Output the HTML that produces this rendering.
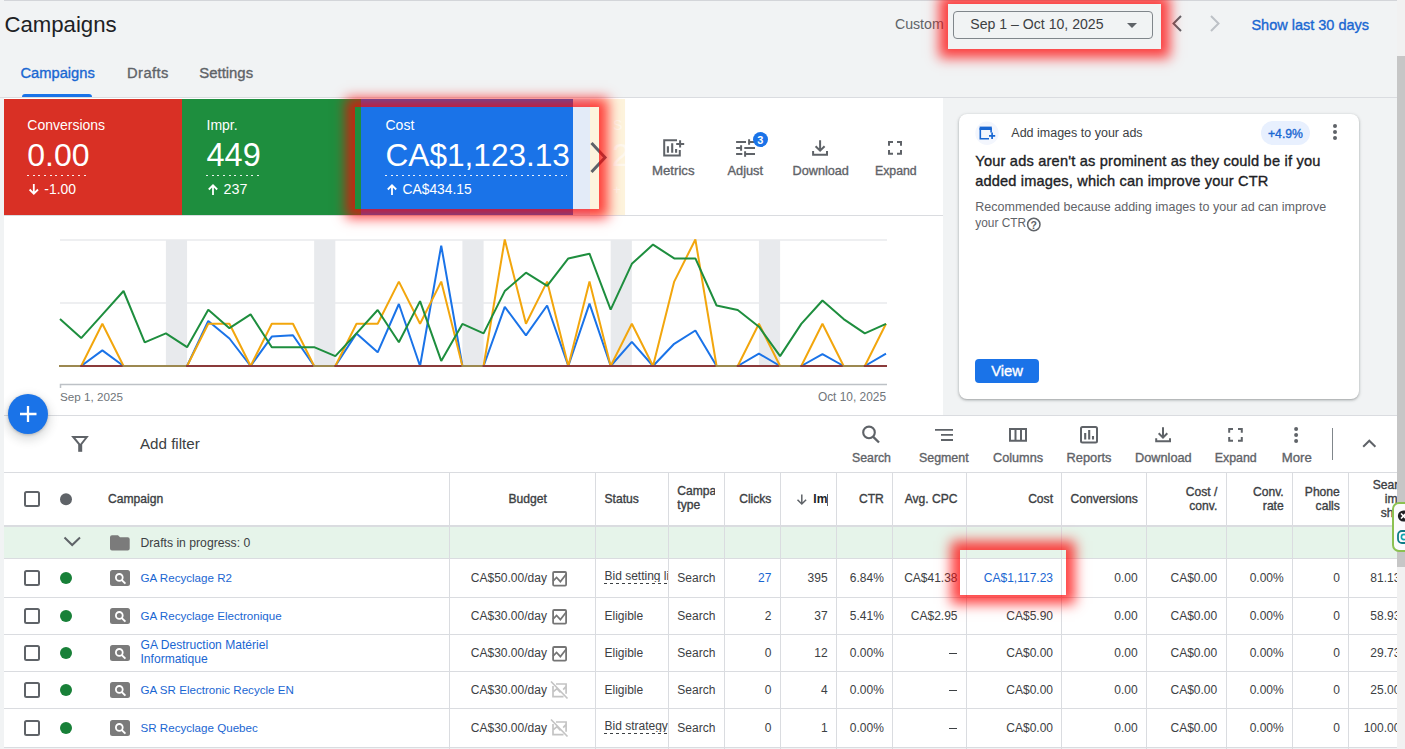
<!DOCTYPE html>
<html><head><meta charset="utf-8">
<style>
*{box-sizing:border-box;margin:0;padding:0}
html,body{width:1405px;height:749px;overflow:hidden;background:#f1f3f4;font-family:"Liberation Sans",sans-serif;color:#3c4043;position:relative}
.r{position:absolute}
.t{position:absolute;white-space:nowrap;line-height:1}
svg{overflow:visible}
</style></head><body>
<div class="r" style="left:4px;top:0px;width:1393px;height:1px;background:#d3d5d9;"></div>
<div class="r" style="left:953px;top:11px;width:200px;height:28px;background:transparent;border:1px solid #80868b;border-radius:4px;"></div>
<div class="r" style="left:22px;top:94px;width:70px;height:3px;background:#1a73e8;border-radius:3px 3px 0 0;"></div>
<div class="r" style="left:0px;top:97px;width:1397px;height:1px;background:#dadce0;"></div>
<div class="r" style="left:4px;top:98px;width:939px;height:317px;background:#ffffff;"></div>
<div class="r" style="left:4px;top:99px;width:178px;height:116px;background:#d93025;"></div>
<div class="r" style="left:182px;top:99px;width:179px;height:116px;background:#1e8e3e;"></div>
<div class="r" style="left:361px;top:99px;width:212px;height:116px;background:#1a73e8;"></div>
<div class="r" style="left:573px;top:99px;width:17px;height:116px;background:#e3ebf8;"></div>
<div class="r" style="left:590px;top:99px;width:35px;height:116px;background:#fdf4dd;"></div>
<div class="r" style="left:27px;top:175px;width:62px;height:1px;background:repeating-linear-gradient(to right,rgba(255,255,255,.9) 0 2px,transparent 2px 5.67px);left:26.8px;"></div>
<div class="r" style="left:27px;top:175px;width:54px;height:1px;background:repeating-linear-gradient(to right,rgba(255,255,255,.9) 0 2px,transparent 2px 5.67px);left:206.0px;"></div>
<div class="r" style="left:27px;top:175px;width:182px;height:1px;background:repeating-linear-gradient(to right,rgba(255,255,255,.9) 0 2px,transparent 2px 5.67px);left:385.0px;"></div>
<div class="r" style="left:4px;top:215px;width:939px;height:1px;background:#dadce0;"></div>
<div class="r" style="left:959px;top:114px;width:400px;height:285px;background:#ffffff;border-radius:8px;box-shadow:0 1px 2px rgba(60,64,67,.3),0 1px 3px 1px rgba(60,64,67,.15);"></div>
<div class="r" style="left:1261px;top:121px;width:49px;height:24px;background:#e8f0fe;border-radius:12px;"></div>
<div class="r" style="left:975px;top:359px;width:64px;height:24px;background:#1a73e8;border-radius:4px;"></div>
<div class="r" style="left:4px;top:415px;width:1393px;height:1px;background:#dadce0;"></div>
<div class="r" style="left:4px;top:416px;width:1393px;height:56px;background:#ffffff;"></div>
<div class="r" style="left:1332px;top:428px;width:1px;height:32px;background:#80868b;"></div>
<div class="r" style="left:4px;top:472px;width:1393px;height:1px;background:#dadce0;"></div>
<div class="r" style="left:4px;top:473px;width:1393px;height:52px;background:#ffffff;"></div>
<div class="r" style="left:4px;top:525px;width:1393px;height:2px;background:#dadce0;"></div>
<div class="r" style="left:4px;top:527px;width:1393px;height:31px;background:#e6f4ea;"></div>
<div class="r" style="left:4px;top:558px;width:1393px;height:1px;background:#dadce0;"></div>
<div class="r" style="left:4px;top:559px;width:1393px;height:38px;background:#ffffff;"></div>
<div class="r" style="left:4px;top:597px;width:1393px;height:1px;background:#dadce0;"></div>
<div class="r" style="left:4px;top:598px;width:1393px;height:36px;background:#ffffff;"></div>
<div class="r" style="left:4px;top:634px;width:1393px;height:1px;background:#dadce0;"></div>
<div class="r" style="left:4px;top:635px;width:1393px;height:36px;background:#ffffff;"></div>
<div class="r" style="left:4px;top:671px;width:1393px;height:1px;background:#dadce0;"></div>
<div class="r" style="left:4px;top:672px;width:1393px;height:36px;background:#ffffff;"></div>
<div class="r" style="left:4px;top:708px;width:1393px;height:1px;background:#dadce0;"></div>
<div class="r" style="left:4px;top:709px;width:1393px;height:38px;background:#ffffff;"></div>
<div class="r" style="left:4px;top:747px;width:1393px;height:1px;background:#dadce0;"></div>
<div class="r" style="left:449px;top:473px;width:1px;height:276px;background:#dadce0;"></div>
<div class="r" style="left:595px;top:473px;width:1px;height:276px;background:#dadce0;"></div>
<div class="r" style="left:668px;top:473px;width:1px;height:276px;background:#dadce0;"></div>
<div class="r" style="left:724px;top:473px;width:1px;height:276px;background:#dadce0;"></div>
<div class="r" style="left:780px;top:473px;width:1px;height:276px;background:#dadce0;"></div>
<div class="r" style="left:836px;top:473px;width:1px;height:276px;background:#dadce0;"></div>
<div class="r" style="left:892px;top:473px;width:1px;height:276px;background:#dadce0;"></div>
<div class="r" style="left:966px;top:473px;width:1px;height:276px;background:#dadce0;"></div>
<div class="r" style="left:1061px;top:473px;width:1px;height:276px;background:#dadce0;"></div>
<div class="r" style="left:1146px;top:473px;width:1px;height:276px;background:#dadce0;"></div>
<div class="r" style="left:1226px;top:473px;width:1px;height:276px;background:#dadce0;"></div>
<div class="r" style="left:1292px;top:473px;width:1px;height:276px;background:#dadce0;"></div>
<div class="r" style="left:1348px;top:473px;width:1px;height:276px;background:#dadce0;"></div>
<div class="r" style="left:826.8px;top:494px;width:0.8px;height:12px;background:#5f6368;"></div>
<div class="r" style="left:604px;top:583px;width:63.5px;height:1.2px;background:repeating-linear-gradient(to right,#3c4043 0 3px,transparent 3px 6px);"></div>
<div class="r" style="left:948.8px;top:653px;width:8.5px;height:1.2px;background:#3c4043;"></div>
<div class="r" style="left:948.8px;top:690px;width:8.5px;height:1.2px;background:#3c4043;"></div>
<div class="r" style="left:604px;top:733px;width:63.5px;height:1.2px;background:repeating-linear-gradient(to right,#3c4043 0 3px,transparent 3px 6px);"></div>
<div class="r" style="left:948.8px;top:728px;width:8.5px;height:1.2px;background:#3c4043;"></div>
<svg class="r" style="left:0;top:0" width="1405" height="749" viewBox="0 0 1405 749"><path d="M1127 23h10l-5 5z" fill="#5f6368"/><path d="M1181 16l-7.5 7.5 7.5 7.5" fill="none" stroke="#5f6368" stroke-width="2"/><path d="M1211 16l7.5 7.5-7.5 7.5" fill="none" stroke="#bdc1c6" stroke-width="2"/><path d="M33.8 184V193.5M29.599999999999998 189.5l4.2 4.2 4.2-4.2" fill="none" stroke="#fff" stroke-width="1.8"/><path d="M213.0 195V185.5M208.8 189.5l4.2-4.2 4.2 4.2" fill="none" stroke="#fff" stroke-width="1.8"/><path d="M392.0 195V185.5M387.8 189.5l4.2-4.2 4.2 4.2" fill="none" stroke="#fff" stroke-width="1.8"/><path d="M591.5 143l13.5 14.5-13.5 14.5" fill="none" stroke="#5f6368" stroke-width="3"/><path d="M677 140.2H664.2V155.4H679.8V150" fill="none" stroke="#5f6368" stroke-width="2"/><path d="M676.2 143.9H684.2M680.1 140.2V147.6" fill="none" stroke="#5f6368" stroke-width="2"/><path d="M667.9 146.3V152.7M672.2 143.2V152.7M676.1 149.1V152.7" fill="none" stroke="#5f6368" stroke-width="2.1"/><path d="M736.1 141.9H746M749.1 139.2V144.7M750 141.9H756M736.1 148H741M741.1 145.2V150.7M744.3 148H755M736.1 153.9H742.3M745.1 151.2V156.7M746 153.9H755" fill="none" stroke="#5f6368" stroke-width="2"/><path d="M820.1 140.2V150.5M815.6 146.2l4.5 4.5 4.5-4.5M813.1 151V154.7H827V151" fill="none" stroke="#5f6368" stroke-width="2"/><path d="M889 145.8V141.9H893M897 141.9H901V145.8M901 149.9V153.8H897M893 153.8H889V149.9" fill="none" stroke="#5f6368" stroke-width="2"/><rect x="165.90" y="240" width="21.18" height="126" fill="#e8eaed"/><rect x="314.15" y="240" width="21.18" height="126" fill="#e8eaed"/><rect x="462.41" y="240" width="21.18" height="126" fill="#e8eaed"/><rect x="610.67" y="240" width="21.18" height="126" fill="#e8eaed"/><rect x="758.92" y="240" width="21.18" height="126" fill="#e8eaed"/><line x1="60" y1="240" x2="887" y2="240" stroke="#e8eaed" stroke-width="1.5"/><line x1="60" y1="303" x2="887" y2="303" stroke="#e8eaed" stroke-width="1.5"/><polyline points="60.00,366.0 81.18,366.0 102.36,350.4 123.54,366.0 144.72,366.0 165.90,366.0 187.08,366.0 208.26,321.0 229.44,338.5 250.62,366.0 271.79,336.6 292.97,335.3 314.15,366.0 335.33,366.0 356.51,333.4 377.69,352.3 398.87,304.0 420.05,366.0 441.23,245.6 462.41,366.0 483.59,366.0 504.77,306.8 525.95,335.3 547.13,305.5 568.31,366.0 589.49,303.6 610.67,366.0 631.85,341.9 653.03,366.0 674.21,343.8 695.38,330.5 716.56,366.0 737.74,366.0 758.92,353.6 780.10,366.0 801.28,366.0 822.46,354.2 843.64,366.0 864.82,366.0 886.00,353.6" fill="none" stroke="#1a73e8" stroke-width="2" stroke-linejoin="bevel"/><polyline points="60.00,366.0 81.18,366.0 102.36,323.8 123.54,366.0 144.72,366.0 165.90,366.0 187.08,366.0 208.26,323.8 229.44,323.8 250.62,366.0 271.79,323.8 292.97,323.8 314.15,366.0 335.33,366.0 356.51,323.8 377.69,323.8 398.87,281.6 420.05,323.8 441.23,281.6 462.41,366.0 483.59,366.0 504.77,239.5 525.95,323.8 547.13,281.6 568.31,366.0 589.49,281.6 610.67,366.0 631.85,323.8 653.03,366.0 674.21,281.6 695.38,239.5 716.56,366.0 737.74,366.0 758.92,323.8 780.10,366.0 801.28,366.0 822.46,323.8 843.64,366.0 864.82,366.0 886.00,323.8" fill="none" stroke="#f2a60d" stroke-width="2" stroke-linejoin="bevel"/><polyline points="60.00,319.1 81.18,338.1 102.36,314.6 123.54,291.0 144.72,342.3 165.90,333.4 187.08,347.2 208.26,309.7 229.44,328.2 250.62,314.4 271.79,347.2 292.97,347.2 314.15,347.2 335.33,356.1 356.51,333.4 377.69,310.0 398.87,342.3 420.05,301.1 441.23,360.9 462.41,323.9 483.59,333.4 504.77,291.1 525.95,272.7 547.13,285.9 568.31,258.4 589.49,253.7 610.67,309.7 631.85,263.8 653.03,244.6 674.21,258.4 695.38,258.4 716.56,305.5 737.74,310.0 758.92,326.7 780.10,356.1 801.28,323.9 822.46,300.5 843.64,319.1 864.82,333.4 886.00,323.9" fill="none" stroke="#1e8e3e" stroke-width="2" stroke-linejoin="bevel"/><line x1="60.00" y1="366" x2="81.18" y2="366" stroke="#9c8850" stroke-width="2" stroke-linecap="square"/><line x1="81.18" y1="366" x2="102.36" y2="366" stroke="#8a3a3a" stroke-width="2" stroke-linecap="square"/><line x1="102.36" y1="366" x2="123.54" y2="366" stroke="#8a3a3a" stroke-width="2" stroke-linecap="square"/><line x1="123.54" y1="366" x2="144.72" y2="366" stroke="#9c8850" stroke-width="2" stroke-linecap="square"/><line x1="144.72" y1="366" x2="165.90" y2="366" stroke="#9c8850" stroke-width="2" stroke-linecap="square"/><line x1="165.90" y1="366" x2="187.08" y2="366" stroke="#9c8850" stroke-width="2" stroke-linecap="square"/><line x1="187.08" y1="366" x2="208.26" y2="366" stroke="#8a3a3a" stroke-width="2" stroke-linecap="square"/><line x1="208.26" y1="366" x2="229.44" y2="366" stroke="#8a3a3a" stroke-width="2" stroke-linecap="square"/><line x1="229.44" y1="366" x2="250.62" y2="366" stroke="#8a3a3a" stroke-width="2" stroke-linecap="square"/><line x1="250.62" y1="366" x2="271.79" y2="366" stroke="#8a3a3a" stroke-width="2" stroke-linecap="square"/><line x1="271.79" y1="366" x2="292.97" y2="366" stroke="#8a3a3a" stroke-width="2" stroke-linecap="square"/><line x1="292.97" y1="366" x2="314.15" y2="366" stroke="#8a3a3a" stroke-width="2" stroke-linecap="square"/><line x1="314.15" y1="366" x2="335.33" y2="366" stroke="#9c8850" stroke-width="2" stroke-linecap="square"/><line x1="335.33" y1="366" x2="356.51" y2="366" stroke="#8a3a3a" stroke-width="2" stroke-linecap="square"/><line x1="356.51" y1="366" x2="377.69" y2="366" stroke="#8a3a3a" stroke-width="2" stroke-linecap="square"/><line x1="377.69" y1="366" x2="398.87" y2="366" stroke="#8a3a3a" stroke-width="2" stroke-linecap="square"/><line x1="398.87" y1="366" x2="420.05" y2="366" stroke="#8a3a3a" stroke-width="2" stroke-linecap="square"/><line x1="420.05" y1="366" x2="441.23" y2="366" stroke="#8a3a3a" stroke-width="2" stroke-linecap="square"/><line x1="441.23" y1="366" x2="462.41" y2="366" stroke="#8a3a3a" stroke-width="2" stroke-linecap="square"/><line x1="462.41" y1="366" x2="483.59" y2="366" stroke="#9c8850" stroke-width="2" stroke-linecap="square"/><line x1="483.59" y1="366" x2="504.77" y2="366" stroke="#8a3a3a" stroke-width="2" stroke-linecap="square"/><line x1="504.77" y1="366" x2="525.95" y2="366" stroke="#8a3a3a" stroke-width="2" stroke-linecap="square"/><line x1="525.95" y1="366" x2="547.13" y2="366" stroke="#8a3a3a" stroke-width="2" stroke-linecap="square"/><line x1="547.13" y1="366" x2="568.31" y2="366" stroke="#8a3a3a" stroke-width="2" stroke-linecap="square"/><line x1="568.31" y1="366" x2="589.49" y2="366" stroke="#8a3a3a" stroke-width="2" stroke-linecap="square"/><line x1="589.49" y1="366" x2="610.67" y2="366" stroke="#8a3a3a" stroke-width="2" stroke-linecap="square"/><line x1="610.67" y1="366" x2="631.85" y2="366" stroke="#8a3a3a" stroke-width="2" stroke-linecap="square"/><line x1="631.85" y1="366" x2="653.03" y2="366" stroke="#8a3a3a" stroke-width="2" stroke-linecap="square"/><line x1="653.03" y1="366" x2="674.21" y2="366" stroke="#8a3a3a" stroke-width="2" stroke-linecap="square"/><line x1="674.21" y1="366" x2="695.38" y2="366" stroke="#8a3a3a" stroke-width="2" stroke-linecap="square"/><line x1="695.38" y1="366" x2="716.56" y2="366" stroke="#8a3a3a" stroke-width="2" stroke-linecap="square"/><line x1="716.56" y1="366" x2="737.74" y2="366" stroke="#9c8850" stroke-width="2" stroke-linecap="square"/><line x1="737.74" y1="366" x2="758.92" y2="366" stroke="#8a3a3a" stroke-width="2" stroke-linecap="square"/><line x1="758.92" y1="366" x2="780.10" y2="366" stroke="#8a3a3a" stroke-width="2" stroke-linecap="square"/><line x1="780.10" y1="366" x2="801.28" y2="366" stroke="#9c8850" stroke-width="2" stroke-linecap="square"/><line x1="801.28" y1="366" x2="822.46" y2="366" stroke="#8a3a3a" stroke-width="2" stroke-linecap="square"/><line x1="822.46" y1="366" x2="843.64" y2="366" stroke="#8a3a3a" stroke-width="2" stroke-linecap="square"/><line x1="843.64" y1="366" x2="864.82" y2="366" stroke="#9c8850" stroke-width="2" stroke-linecap="square"/><line x1="864.82" y1="366" x2="886.00" y2="366" stroke="#8a3a3a" stroke-width="2" stroke-linecap="square"/><path d="M60.5 388V384.5H887" fill="none" stroke="#bdc1c6" stroke-width="1.5"/><circle cx="987" cy="133.2" r="11.7" fill="#f3f6fd"/><path d="M979.6 126.6H991.8V130H979.6z" fill="#1967d2"/><path d="M980.3 128V138.8H989M991.1 128V132.5" fill="none" stroke="#1967d2" stroke-width="1.6"/><path d="M989 135.8H995.2M992.1 132.6V139" fill="none" stroke="#1967d2" stroke-width="1.7"/><circle cx="1335" cy="126" r="2" fill="#5f6368"/><circle cx="1335" cy="132" r="2" fill="#5f6368"/><circle cx="1335" cy="138" r="2" fill="#5f6368"/><circle cx="1033.8" cy="224.5" r="6.2" fill="none" stroke="#5f6368" stroke-width="1.5"/><path d="M73.2 437H86.8L80.2 445.5z" fill="none" stroke="#5f6368" stroke-width="2" stroke-linejoin="miter"/><rect x="78.2" y="444.5" width="4" height="7.3" fill="#5f6368"/><circle cx="869" cy="432.4" r="5.8" fill="none" stroke="#5f6368" stroke-width="2.1"/><path d="M873 436.6L879 442.5" stroke="#5f6368" stroke-width="2.3"/><path d="M935 429.9H953M941 434.9H953M941 440H953" stroke="#5f6368" stroke-width="1.8"/><path d="M1010 429.1H1026V440.8H1010z M1015.5 429V441 M1021 429V441" fill="none" stroke="#5f6368" stroke-width="2"/><rect x="1081" y="427" width="16" height="15.6" rx="1.5" fill="none" stroke="#5f6368" stroke-width="2"/><path d="M1085.2 433V439.6M1089.2 430V439.6M1093 436V439.6" stroke="#5f6368" stroke-width="2.1"/><path d="M1163 427.3V437.5M1158.7 433.3l4.3 4.3 4.3-4.3M1156.2 438.2V441.2H1170V438.2" fill="none" stroke="#5f6368" stroke-width="2"/><path d="M1229.2 432.8V429.1H1233M1238 429.1H1241.8V432.8M1241.8 437V440.8H1238M1233 440.8H1229.2V437" fill="none" stroke="#5f6368" stroke-width="2"/><circle cx="1296.1" cy="428.9" r="2" fill="#5f6368"/><circle cx="1296.1" cy="434.9" r="2" fill="#5f6368"/><circle cx="1296.1" cy="440.9" r="2" fill="#5f6368"/><path d="M1363.2 446.8L1369.3 440.7 1375.4 446.8" fill="none" stroke="#5f6368" stroke-width="2"/><rect x="25" y="492" width="14" height="14" rx="1.5" fill="none" stroke="#5f6368" stroke-width="2"/><circle cx="66" cy="499.2" r="6" fill="#5f6368"/><path d="M801.8 494.5V504M797.5 499.7l4.3 4.3 4.3-4.3" fill="none" stroke="#5f6368" stroke-width="1.5"/><path d="M64.5 537.5L72.2 545 80 537.5" fill="none" stroke="#5f6368" stroke-width="2"/><path d="M110 537.3a2 2 0 0 1 2-2h6l2 2h7.7a2 2 0 0 1 2 2v9.3a2 2 0 0 1-2 2H112a2 2 0 0 1-2-2z" fill="#7b7b7b"/><rect x="25" y="571" width="14" height="14" rx="1.5" fill="none" stroke="#5f6368" stroke-width="2"/><circle cx="66" cy="578" r="6" fill="#188038"/><rect x="110" y="570" width="20" height="16" rx="2.5" fill="#7b7b7b"/><circle cx="119.3" cy="577.4" r="3.4" fill="none" stroke="#fff" stroke-width="1.8"/><path d="M121.6 579.8l3.8 3.8" stroke="#fff" stroke-width="1.9"/><rect x="553.1" y="572" width="13" height="13.6" rx="1" fill="none" stroke="#757575" stroke-width="1.8"/><path d="M553 581.2L556.6 577.4L560.4 581.6L566.5 573.8" fill="none" stroke="#757575" stroke-width="1.7"/><rect x="25" y="609" width="14" height="14" rx="1.5" fill="none" stroke="#5f6368" stroke-width="2"/><circle cx="66" cy="616" r="6" fill="#188038"/><rect x="110" y="608" width="20" height="16" rx="2.5" fill="#7b7b7b"/><circle cx="119.3" cy="615.4" r="3.4" fill="none" stroke="#fff" stroke-width="1.8"/><path d="M121.6 617.8l3.8 3.8" stroke="#fff" stroke-width="1.9"/><rect x="553.1" y="610" width="13" height="13.6" rx="1" fill="none" stroke="#757575" stroke-width="1.8"/><path d="M553 619.2L556.6 615.4L560.4 619.6L566.5 611.8" fill="none" stroke="#757575" stroke-width="1.7"/><rect x="25" y="646" width="14" height="14" rx="1.5" fill="none" stroke="#5f6368" stroke-width="2"/><circle cx="66" cy="653" r="6" fill="#188038"/><rect x="110" y="645" width="20" height="16" rx="2.5" fill="#7b7b7b"/><circle cx="119.3" cy="652.4" r="3.4" fill="none" stroke="#fff" stroke-width="1.8"/><path d="M121.6 654.8l3.8 3.8" stroke="#fff" stroke-width="1.9"/><rect x="553.1" y="647" width="13" height="13.6" rx="1" fill="none" stroke="#757575" stroke-width="1.8"/><path d="M553 656.2L556.6 652.4L560.4 656.6L566.5 648.8" fill="none" stroke="#757575" stroke-width="1.7"/><rect x="25" y="683" width="14" height="14" rx="1.5" fill="none" stroke="#5f6368" stroke-width="2"/><circle cx="66" cy="690" r="6" fill="#188038"/><rect x="110" y="682" width="20" height="16" rx="2.5" fill="#7b7b7b"/><circle cx="119.3" cy="689.4" r="3.4" fill="none" stroke="#fff" stroke-width="1.8"/><path d="M121.6 691.8l3.8 3.8" stroke="#fff" stroke-width="1.9"/><path d="M556 684H566.1V693.8M553 686V696.7H563.5M552.8 692.1L557 688.6L560.5 692.5M563.2 689.6L566.4 686.2M551 681.5L567.5 698.5" fill="none" stroke="#c4c4c4" stroke-width="1.7"/><rect x="25" y="721" width="14" height="14" rx="1.5" fill="none" stroke="#5f6368" stroke-width="2"/><circle cx="66" cy="728" r="6" fill="#188038"/><rect x="110" y="720" width="20" height="16" rx="2.5" fill="#7b7b7b"/><circle cx="119.3" cy="727.4" r="3.4" fill="none" stroke="#fff" stroke-width="1.8"/><path d="M121.6 729.8l3.8 3.8" stroke="#fff" stroke-width="1.9"/><path d="M556 722H566.1V731.8M553 724V734.7H563.5M552.8 730.1L557 726.6L560.5 730.5M563.2 727.6L566.4 724.2M551 719.5L567.5 736.5" fill="none" stroke="#c4c4c4" stroke-width="1.7"/></svg>
<div class="t" style="left:4.40px;top:14.00px;font-size:22.2px;color:#202124;">Campaigns</div>
<div class="t" style="left:894.90px;top:17.00px;font-size:14.2px;color:#5f6368;">Custom</div>
<div class="t" style="left:970.30px;top:17.00px;font-size:14.1px;color:#3c4043;">Sep 1 – Oct 10, 2025</div>
<div class="t" style="left:1251.40px;top:18.00px;font-size:14.5px;color:#1967d2;-webkit-text-stroke:0.35px #1967d2;">Show last 30 days</div>
<div class="t" style="left:20.50px;top:66.00px;font-size:14.7px;color:#1967d2;-webkit-text-stroke:0.35px #1967d2;">Campaigns</div>
<div class="t" style="left:127.00px;top:66.00px;font-size:14.7px;color:#5f6368;-webkit-text-stroke:0.35px #5f6368;letter-spacing:0.45px;">Drafts</div>
<div class="t" style="left:199.30px;top:66.00px;font-size:14.9px;color:#5f6368;-webkit-text-stroke:0.35px #5f6368;">Settings</div>
<div class="t" style="left:27.30px;top:118.00px;font-size:14px;color:#ffffff;">Conversions</div>
<div class="t" style="left:27.30px;top:139.00px;font-size:32px;color:#ffffff;">0.00</div>
<div class="t" style="left:44.30px;top:183.00px;font-size:13.9px;color:#ffffff;">-1.00</div>
<div class="t" style="left:206.50px;top:118.00px;font-size:14px;color:#ffffff;">Impr.</div>
<div class="t" style="left:206.50px;top:139.00px;font-size:32.5px;color:#ffffff;">449</div>
<div class="t" style="left:223.50px;top:182.00px;font-size:14.3px;color:#ffffff;">237</div>
<div class="t" style="left:385.50px;top:118.00px;font-size:14px;color:#ffffff;">Cost</div>
<div class="t" style="left:385.50px;top:140.00px;font-size:31.6px;color:#ffffff;">CA$1,123.13</div>
<div class="t" style="left:402.60px;top:183.00px;font-size:13.8px;color:#ffffff;">CA$434.15</div>
<div class="t" style="left:613.00px;top:118.00px;font-size:14px;color:rgba(255,255,255,.55);">S</div>
<div class="t" style="left:612.00px;top:139.00px;font-size:32px;color:rgba(255,255,255,.55);">2</div>
<div class="t" style="left:613.00px;top:183.00px;font-size:13px;color:rgba(255,255,255,.55);">+</div>
<div class="t" style="left:652.00px;top:164.00px;font-size:13.2px;color:#5f6368;-webkit-text-stroke:0.35px #5f6368;">Metrics</div>
<div class="r" style="left:753.1px;top:132.1px;width:15.4px;height:15.4px;background:#1a73e8;border-radius:50%;"></div>
<div class="t" style="left:757.30px;top:135.00px;font-size:11px;color:#ffffff;font-weight:bold;">3</div>
<div class="t" style="left:727.50px;top:165.00px;font-size:12.8px;color:#5f6368;-webkit-text-stroke:0.35px #5f6368;">Adjust</div>
<div class="t" style="left:792.50px;top:165.00px;font-size:12.7px;color:#5f6368;-webkit-text-stroke:0.35px #5f6368;">Download</div>
<div class="t" style="left:875.00px;top:165.00px;font-size:12.3px;color:#5f6368;-webkit-text-stroke:0.35px #5f6368;">Expand</div>
<div class="t" style="left:60.00px;top:391.00px;font-size:11.7px;color:#70757a;">Sep 1, 2025</div>
<div class="t" style="right:519.00px;top:392.00px;font-size:11.9px;color:#70757a;">Oct 10, 2025</div>
<div class="t" style="left:1011.30px;top:127.00px;font-size:12.5px;color:#3c4043;">Add images to your ads</div>
<div class="t" style="left:1268.00px;top:128.00px;font-size:12.2px;color:#1967d2;-webkit-text-stroke:0.35px #1967d2;">+4.9%</div>
<div class="t" style="left:975.30px;top:154.00px;font-size:14.6px;color:#202124;-webkit-text-stroke:0.35px #202124;letter-spacing:0.2px;">Your ads aren&#x27;t as prominent as they could be if you</div>
<div class="t" style="left:975.30px;top:174.00px;font-size:14.6px;color:#202124;-webkit-text-stroke:0.35px #202124;letter-spacing:0.15px;">added images, which can improve your CTR</div>
<div class="t" style="left:975.30px;top:201.00px;font-size:12.5px;color:#5f6368;">Recommended because adding images to your ad can improve</div>
<div class="t" style="left:975.30px;top:218.00px;font-size:11.9px;color:#5f6368;">your CTR</div>
<div class="t" style="left:1030.50px;top:220.00px;font-size:10.5px;color:#5f6368;font-weight:bold;">?</div>
<div class="t" style="left:991.20px;top:364.00px;font-size:14.8px;color:#ffffff;-webkit-text-stroke:0.35px #ffffff;">View</div>
<div class="t" style="left:139.90px;top:436.00px;font-size:15.2px;color:#3c4043;">Add filter</div>
<div class="t" style="left:852.00px;top:452.00px;font-size:12.3px;color:#5f6368;-webkit-text-stroke:0.35px #5f6368;">Search</div>
<div class="t" style="left:919.00px;top:452.00px;font-size:12.4px;color:#5f6368;-webkit-text-stroke:0.35px #5f6368;">Segment</div>
<div class="t" style="left:993.00px;top:452.00px;font-size:12.7px;color:#5f6368;-webkit-text-stroke:0.35px #5f6368;">Columns</div>
<div class="t" style="left:1066.60px;top:452.00px;font-size:12.8px;color:#5f6368;-webkit-text-stroke:0.35px #5f6368;">Reports</div>
<div class="t" style="left:1135.00px;top:452.00px;font-size:12.75px;color:#5f6368;-webkit-text-stroke:0.35px #5f6368;">Download</div>
<div class="t" style="left:1214.70px;top:452.00px;font-size:12.4px;color:#5f6368;-webkit-text-stroke:0.35px #5f6368;">Expand</div>
<div class="t" style="left:1281.70px;top:451.00px;font-size:13.2px;color:#5f6368;-webkit-text-stroke:0.35px #5f6368;">More</div>
<div class="t" style="left:108.00px;top:493.00px;font-size:12.1px;color:#3c4043;-webkit-text-stroke:0.35px #3c4043;">Campaign</div>
<div class="t" style="right:858.20px;top:493.00px;font-size:12.1px;color:#3c4043;-webkit-text-stroke:0.35px #3c4043;">Budget</div>
<div class="t" style="left:604.50px;top:493.00px;font-size:12.1px;color:#3c4043;-webkit-text-stroke:0.35px #3c4043;">Status</div>
<div class="t" style="left:677.3px;top:485px;width:38px;overflow:hidden;font-size:12.1px;line-height:13.5px;-webkit-text-stroke:0.35px #3c4043;color:#3c4043;white-space:normal">Campaign<br>type</div>
<div class="t" style="right:633.60px;top:493.00px;font-size:12.1px;color:#3c4043;-webkit-text-stroke:0.35px #3c4043;">Clicks</div>
<div class="t" style="left:813.3px;top:493px;width:14px;overflow:hidden;font-size:12.1px;font-weight:bold;color:#202124">Impr.</div>
<div class="t" style="right:521.20px;top:493.00px;font-size:12.1px;color:#3c4043;-webkit-text-stroke:0.35px #3c4043;">CTR</div>
<div class="t" style="right:447.50px;top:493.00px;font-size:12.1px;color:#3c4043;-webkit-text-stroke:0.35px #3c4043;">Avg. CPC</div>
<div class="t" style="right:352.00px;top:493.00px;font-size:12.1px;color:#3c4043;-webkit-text-stroke:0.35px #3c4043;">Cost</div>
<div class="t" style="right:267.30px;top:493.00px;font-size:12.1px;color:#3c4043;-webkit-text-stroke:0.35px #3c4043;">Conversions</div>
<div class="t" style="right:187.70px;top:486.00px;font-size:12.1px;color:#3c4043;-webkit-text-stroke:0.35px #3c4043;">Cost /</div>
<div class="t" style="right:187.70px;top:500.00px;font-size:12.1px;color:#3c4043;-webkit-text-stroke:0.35px #3c4043;">conv.</div>
<div class="t" style="right:121.30px;top:486.00px;font-size:12.1px;color:#3c4043;-webkit-text-stroke:0.35px #3c4043;">Conv.</div>
<div class="t" style="right:121.30px;top:500.00px;font-size:12.1px;color:#3c4043;-webkit-text-stroke:0.35px #3c4043;">rate</div>
<div class="t" style="right:65.20px;top:486.00px;font-size:12.1px;color:#3c4043;-webkit-text-stroke:0.35px #3c4043;">Phone</div>
<div class="t" style="right:65.20px;top:500.00px;font-size:12.1px;color:#3c4043;-webkit-text-stroke:0.35px #3c4043;">calls</div>
<div class="t" style="right:-6.00px;top:479.00px;font-size:12.1px;color:#3c4043;-webkit-text-stroke:0.35px #3c4043;">Search</div>
<div class="t" style="right:-6.00px;top:493.00px;font-size:12.1px;color:#3c4043;-webkit-text-stroke:0.35px #3c4043;">impr.</div>
<div class="t" style="right:-6.00px;top:507.00px;font-size:12.1px;color:#3c4043;-webkit-text-stroke:0.35px #3c4043;">share</div>
<div class="t" style="left:140.50px;top:537.00px;font-size:12.2px;color:#3c4043;">Drafts in progress: 0</div>
<div class="t" style="left:140.50px;top:572.00px;font-size:11.6px;color:#1a66d2;">GA Recyclage R2</div>
<div class="t" style="right:858.10px;top:572.00px;font-size:12.0px;color:#3c4043;">CA$50.00/day</div>
<div class="t" style="left:604.5px;top:570px;width:63px;overflow:hidden;font-size:12.0px;color:#3c4043">Bid setting limited</div>
<div class="t" style="left:677.30px;top:572.00px;font-size:12.0px;color:#3c4043;">Search</div>
<div class="t" style="right:633.60px;top:572.00px;font-size:12.0px;color:#1a66d2;">27</div>
<div class="t" style="right:577.40px;top:572.00px;font-size:12.0px;color:#3c4043;">395</div>
<div class="t" style="right:521.20px;top:572.00px;font-size:12.0px;color:#3c4043;">6.84%</div>
<div class="t" style="right:447.50px;top:572.00px;font-size:12.0px;color:#3c4043;">CA$41.38</div>
<div class="t" style="right:352.00px;top:572.00px;font-size:12.0px;color:#1a66d2;">CA$1,117.23</div>
<div class="t" style="right:267.30px;top:572.00px;font-size:12.0px;color:#3c4043;">0.00</div>
<div class="t" style="right:187.80px;top:572.00px;font-size:12.0px;color:#3c4043;">CA$0.00</div>
<div class="t" style="right:121.30px;top:572.00px;font-size:12.0px;color:#3c4043;">0.00%</div>
<div class="t" style="right:65.20px;top:572.00px;font-size:12.0px;color:#3c4043;">0</div>
<div class="t" style="right:-6.00px;top:572.00px;font-size:12.0px;color:#3c4043;">81.13%</div>
<div class="t" style="left:140.50px;top:610.00px;font-size:11.6px;color:#1a66d2;">GA Recyclage Electronique</div>
<div class="t" style="right:858.10px;top:610.00px;font-size:12.0px;color:#3c4043;">CA$30.00/day</div>
<div class="t" style="left:604.50px;top:610.00px;font-size:12.0px;color:#3c4043;">Eligible</div>
<div class="t" style="left:677.30px;top:610.00px;font-size:12.0px;color:#3c4043;">Search</div>
<div class="t" style="right:633.60px;top:610.00px;font-size:12.0px;color:#3c4043;">2</div>
<div class="t" style="right:577.40px;top:610.00px;font-size:12.0px;color:#3c4043;">37</div>
<div class="t" style="right:521.20px;top:610.00px;font-size:12.0px;color:#3c4043;">5.41%</div>
<div class="t" style="right:447.50px;top:610.00px;font-size:12.0px;color:#3c4043;">CA$2.95</div>
<div class="t" style="right:352.00px;top:610.00px;font-size:12.0px;color:#3c4043;">CA$5.90</div>
<div class="t" style="right:267.30px;top:610.00px;font-size:12.0px;color:#3c4043;">0.00</div>
<div class="t" style="right:187.80px;top:610.00px;font-size:12.0px;color:#3c4043;">CA$0.00</div>
<div class="t" style="right:121.30px;top:610.00px;font-size:12.0px;color:#3c4043;">0.00%</div>
<div class="t" style="right:65.20px;top:610.00px;font-size:12.0px;color:#3c4043;">0</div>
<div class="t" style="right:-6.00px;top:610.00px;font-size:12.0px;color:#3c4043;">58.93%</div>
<div class="t" style="left:140.50px;top:639.00px;font-size:12.1px;color:#1a66d2;">GA Destruction Matériel</div>
<div class="t" style="left:140.50px;top:653.00px;font-size:12.1px;color:#1a66d2;">Informatique</div>
<div class="t" style="right:858.10px;top:647.00px;font-size:12.0px;color:#3c4043;">CA$30.00/day</div>
<div class="t" style="left:604.50px;top:647.00px;font-size:12.0px;color:#3c4043;">Eligible</div>
<div class="t" style="left:677.30px;top:647.00px;font-size:12.0px;color:#3c4043;">Search</div>
<div class="t" style="right:633.60px;top:647.00px;font-size:12.0px;color:#3c4043;">0</div>
<div class="t" style="right:577.40px;top:647.00px;font-size:12.0px;color:#3c4043;">12</div>
<div class="t" style="right:521.20px;top:647.00px;font-size:12.0px;color:#3c4043;">0.00%</div>
<div class="t" style="right:352.00px;top:647.00px;font-size:12.0px;color:#3c4043;">CA$0.00</div>
<div class="t" style="right:267.30px;top:647.00px;font-size:12.0px;color:#3c4043;">0.00</div>
<div class="t" style="right:187.80px;top:647.00px;font-size:12.0px;color:#3c4043;">CA$0.00</div>
<div class="t" style="right:121.30px;top:647.00px;font-size:12.0px;color:#3c4043;">0.00%</div>
<div class="t" style="right:65.20px;top:647.00px;font-size:12.0px;color:#3c4043;">0</div>
<div class="t" style="right:-6.00px;top:647.00px;font-size:12.0px;color:#3c4043;">29.73%</div>
<div class="t" style="left:140.50px;top:684.00px;font-size:11.6px;color:#1a66d2;">GA SR Electronic Recycle EN</div>
<div class="t" style="right:858.10px;top:684.00px;font-size:12.0px;color:#3c4043;">CA$30.00/day</div>
<div class="t" style="left:604.50px;top:684.00px;font-size:12.0px;color:#3c4043;">Eligible</div>
<div class="t" style="left:677.30px;top:684.00px;font-size:12.0px;color:#3c4043;">Search</div>
<div class="t" style="right:633.60px;top:684.00px;font-size:12.0px;color:#3c4043;">0</div>
<div class="t" style="right:577.40px;top:684.00px;font-size:12.0px;color:#3c4043;">4</div>
<div class="t" style="right:521.20px;top:684.00px;font-size:12.0px;color:#3c4043;">0.00%</div>
<div class="t" style="right:352.00px;top:684.00px;font-size:12.0px;color:#3c4043;">CA$0.00</div>
<div class="t" style="right:267.30px;top:684.00px;font-size:12.0px;color:#3c4043;">0.00</div>
<div class="t" style="right:187.80px;top:684.00px;font-size:12.0px;color:#3c4043;">CA$0.00</div>
<div class="t" style="right:121.30px;top:684.00px;font-size:12.0px;color:#3c4043;">0.00%</div>
<div class="t" style="right:65.20px;top:684.00px;font-size:12.0px;color:#3c4043;">0</div>
<div class="t" style="right:-6.00px;top:684.00px;font-size:12.0px;color:#3c4043;">25.00%</div>
<div class="t" style="left:140.50px;top:722.00px;font-size:11.6px;color:#1a66d2;">SR Recyclage Quebec</div>
<div class="t" style="right:858.10px;top:722.00px;font-size:12.0px;color:#3c4043;">CA$30.00/day</div>
<div class="t" style="left:604.5px;top:720px;width:63px;overflow:hidden;font-size:12.0px;color:#3c4043">Bid strategy learning</div>
<div class="t" style="left:677.30px;top:722.00px;font-size:12.0px;color:#3c4043;">Search</div>
<div class="t" style="right:633.60px;top:722.00px;font-size:12.0px;color:#3c4043;">0</div>
<div class="t" style="right:577.40px;top:722.00px;font-size:12.0px;color:#3c4043;">1</div>
<div class="t" style="right:521.20px;top:722.00px;font-size:12.0px;color:#3c4043;">0.00%</div>
<div class="t" style="right:352.00px;top:722.00px;font-size:12.0px;color:#3c4043;">CA$0.00</div>
<div class="t" style="right:267.30px;top:722.00px;font-size:12.0px;color:#3c4043;">0.00</div>
<div class="t" style="right:187.80px;top:722.00px;font-size:12.0px;color:#3c4043;">CA$0.00</div>
<div class="t" style="right:121.30px;top:722.00px;font-size:12.0px;color:#3c4043;">0.00%</div>
<div class="t" style="right:65.20px;top:722.00px;font-size:12.0px;color:#3c4043;">0</div>
<div class="t" style="right:-6.00px;top:722.00px;font-size:12.0px;color:#3c4043;">100.00%</div>
<div class="r" style="left:8px;top:394px;width:40px;height:40px;background:#1a73e8;border-radius:50%;box-shadow:0 1px 3px rgba(60,64,67,.3),0 4px 8px 3px rgba(60,64,67,.15);"></div>
<div class="r" style="left:0px;top:98px;width:4px;height:651px;background:#f1f3f4;"></div>
<div class="r" style="left:1397px;top:0px;width:8px;height:749px;background:#f1f1f1;"></div>
<div class="r" style="left:1397px;top:56px;width:8px;height:511px;background:#c6c6c6;"></div>
<div class="r" style="left:1392px;top:501.5px;width:22px;height:50px;background:#fbfbfd;border:2px solid #8cc152;border-radius:7px;"></div>
<svg class="r" style="left:0;top:0" width="1405" height="749" viewBox="0 0 1405 749"><path d="M28 406V422M20 414H36.5" stroke="#fff" stroke-width="2.3"/><circle cx="1403.5" cy="516" r="5.6" fill="#202124"/><path d="M1401 513.5l5 5M1406 513.5l-5 5" stroke="#fff" stroke-width="1.6"/><rect x="1398" y="531" width="13" height="12" rx="4" fill="none" stroke="#0f7d86" stroke-width="1.8"/><circle cx="1404" cy="537" r="2.6" fill="none" stroke="#12a4af" stroke-width="1.6"/></svg>
<div class="r" style="left:948px;top:4px;width:213px;height:45px;box-shadow:0 0 12px 9px rgba(255,0,0,.74)"></div>
<div class="r" style="left:355px;top:107px;width:244px;height:102px;box-shadow:0 0 12px 9px rgba(255,0,0,.74)"></div>
<div class="r" style="left:960px;top:550px;width:106px;height:45px;box-shadow:0 0 12px 9px rgba(255,0,0,.74)"></div>
</body></html>
